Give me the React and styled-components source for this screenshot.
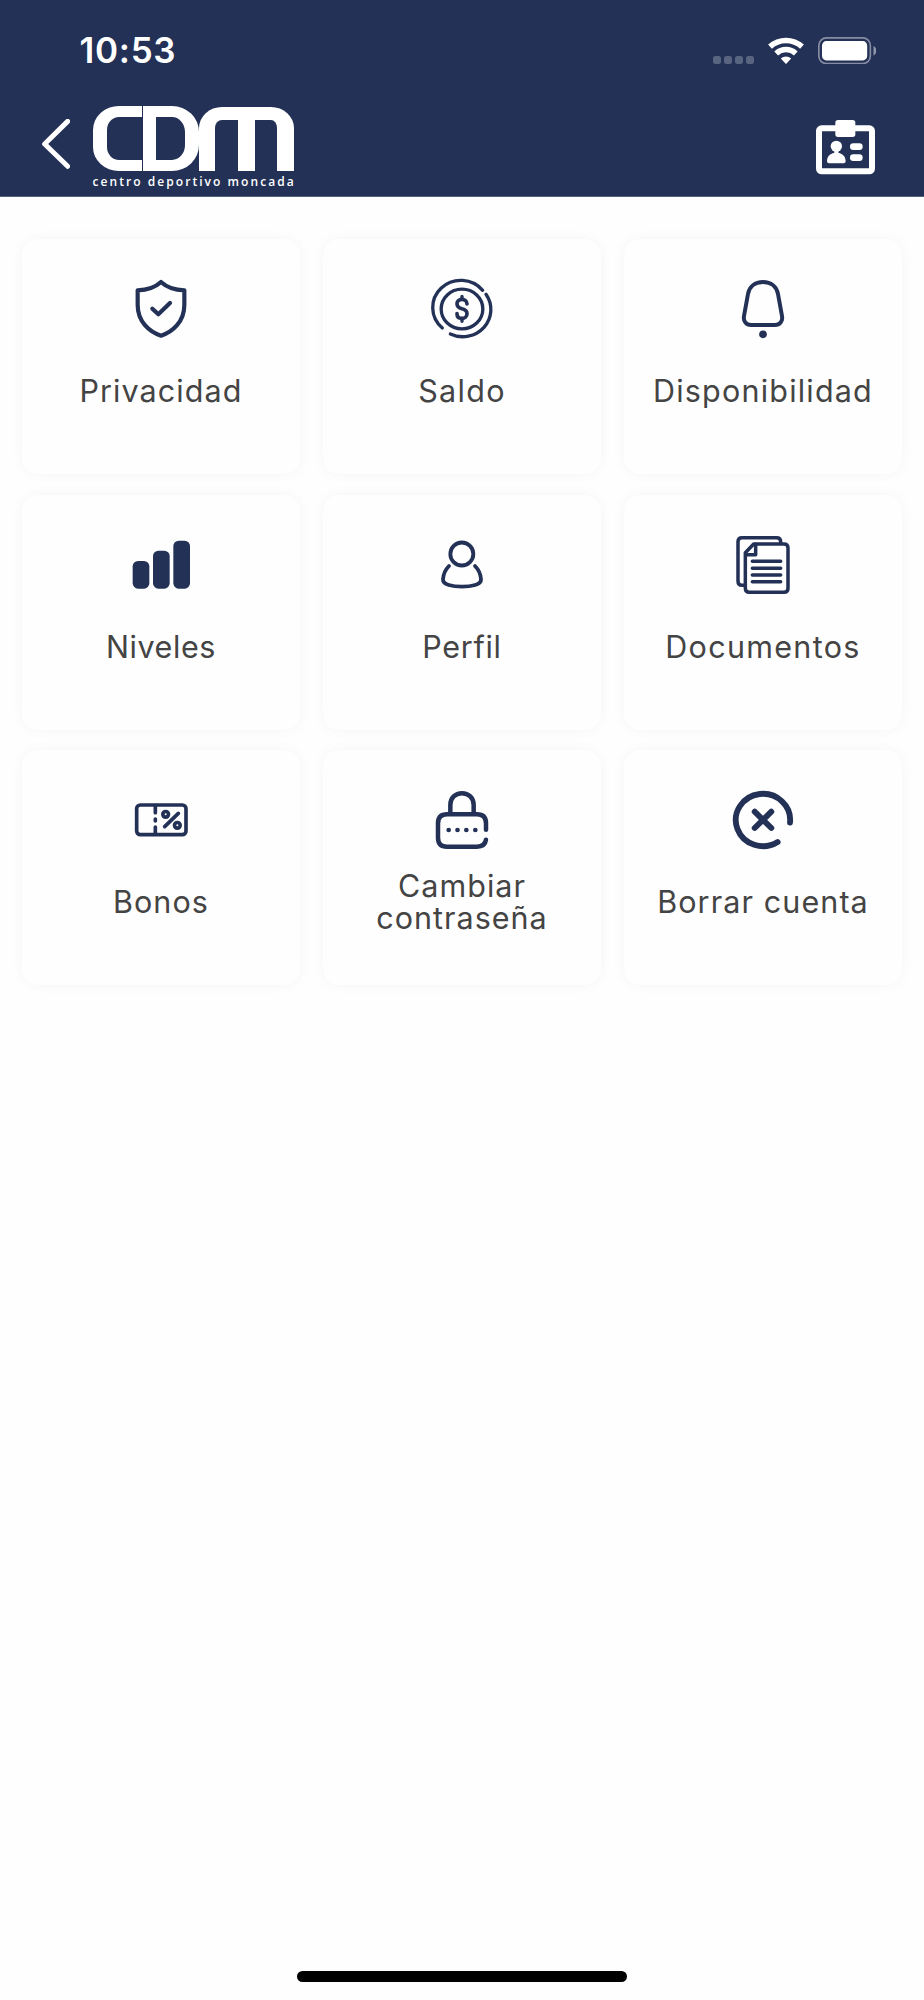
import React from 'react';
import styled, { createGlobalStyle } from 'styled-components';

const NAVY = '#233156';

const MENU = [
  { label: 'Privacidad', icon: 'privacy', tracking: 1.1 },
  { label: 'Saldo', icon: 'balance', tracking: 1.3 },
  { label: 'Disponibilidad', icon: 'bell', tracking: 1.2 },
  { label: 'Niveles', icon: 'levels', tracking: 0.6 },
  { label: 'Perfil', icon: 'profile', tracking: 0.7 },
  { label: 'Documentos', icon: 'documents', tracking: 1.3 },
  { label: 'Bonos', icon: 'voucher', tracking: 1.1 },
  { label: 'Cambiar contraseña', icon: 'lock', tracking: 1 },
  { label: 'Borrar cuenta', icon: 'remove', tracking: 1.1 },
];

// every tile icon is drawn on the same 180x174 grid
const ICONS = {
  privacy: (
    <g strokeWidth="12.5">
      <path d="M90 6C75 20 52 30 20 31V75C20 125 55 156 90 167C125 156 160 125 160 75V31C128 30 105 20 90 6Z" />
      <path d="M64 86L82 103L117 69" />
    </g>
  ),
  balance: (
    <g strokeWidth="10">
      <path d="M152 31A84.500 81.500 0 1 0 31 144" />
      <path d="M162 43A84.500 81.500 0 0 1 55 162" />
      <ellipse cx="90" cy="87" rx="62.5" ry="59.5" />
      <path strokeWidth="11" d="M105 72C105 63 98 58 90 58C81 58 75 64 75 71C75 80 82 84 90 86C99 88 105 93 105 101C105 110 98 115 90 115C81 115 75 110 75 101" />
      <path d="M90 49V58M90 115V124" />
    </g>
  ),
  bell: (
    <g strokeWidth="12">
      <path d="M90 6C66 6 49 20 45 42L33 108C30 124 40 135 54 135H126C140 135 150 124 147 108L135 42C131 20 114 6 90 6Z" />
      <circle cx="90" cy="163" r="11.5" fill={NAVY} stroke="none" />
    </g>
  ),
  levels: (
    <g fill={NAVY} stroke="none">
      <rect x="5" y="75" width="50" height="83" rx="16" />
      <rect x="66" y="44" width="50" height="114" rx="16" />
      <rect x="127" y="14" width="50" height="144" rx="16" />
    </g>
  ),
  profile: (
    <g strokeWidth="11.5">
      <circle cx="89.5" cy="54" r="34.5" />
      <path d="M51 90C40 101 34 115 33 130C32 146 62 152 90 152C118 152 148 146 147 130C146 115 140 101 129 90" />
    </g>
  ),
  documents: (
    <g strokeWidth="10.5">
      <path d="M33 148H27C19 148 15 144 15 136V17C15 9 19 5 27 5H131C139 5 143 9 143 17V22" />
      <path d="M62 24H153Q165 24 165 36V157Q165 169 153 169H49Q37 169 37 157V50Z" />
      <path d="M68 25V56H38" />
      <path d="M58 76H143M58 96.5H143M58 117H143M58 137H143" />
    </g>
  ),
  voucher: (
    <g strokeWidth="11">
      <rect x="17" y="42" width="148" height="89" rx="11" />
      <path d="M73 44V65M73 84V90M73 108V129" />
      <path d="M142 67L101 107" />
      <circle cx="104" cy="70" r="8.5" />
      <circle cx="139" cy="103" r="8.5" />
    </g>
  ),
  lock: (
    <g strokeWidth="13.5">
      <path d="M55 68V42C55 21 70 6.5 90 6.5S125 21 125 42V68" />
      <path d="M162 116V97Q162 70 135 70H45Q18 70 18 97V140Q18 167 45 167H135Q159 167 162 146" />
      <g fill={NAVY} stroke="none">
        <circle cx="50" cy="117" r="7" />
        <circle cx="76.5" cy="117" r="7" />
        <circle cx="103" cy="117" r="7" />
        <circle cx="130" cy="117" r="7" />
      </g>
    </g>
  ),
  remove: (
    <g strokeWidth="17.5">
      <path d="M171 95A81.5 78.5 0 1 0 134 153" />
      <path d="M65 62L115 111M115 62L65 111" />
    </g>
  ),
};

const App = () => {
  return (
    <React.Fragment>
      <GlobalStyle />
      <Screen>
        <Header>
          <StatusBar>
            <Time>10:53</Time>
            <StatusIcons>
              <Signal>
                <i />
                <i />
                <i />
                <i />
              </Signal>
              <svg width="36" height="27.5" viewBox="0 0 108 82" fill="none" stroke="#fff" strokeWidth="16.5">
                <path d="M6 28.6A71 71 0 0 1 102 28.6" />
                <path d="M24.6 49A43.5 43.5 0 0 1 83.4 49" />
                <path d="M54 81L38.5 64A23 23 0 0 1 69.5 64Z" fill="#fff" stroke="none" />
              </svg>
              <svg width="58.5" height="27.5" viewBox="0 0 176 82">
                <rect x="2.5" y="2.5" width="155" height="77" rx="23" fill="none" stroke="#fff" strokeOpacity="0.45" strokeWidth="5" />
                <rect x="12" y="12" width="136" height="58" rx="13" fill="#fff" />
                <path d="M167 27C178 32 178 50 167 55Z" fill="#fff" fillOpacity="0.5" />
              </svg>
            </StatusIcons>
          </StatusBar>
          <NavBar>
            <IconButton aria-label="Volver">
              <svg width="28.3" height="50" viewBox="0 0 85 150" fill="none" stroke="#fff" strokeWidth="15" strokeLinecap="round" strokeLinejoin="round">
                <path d="M77 7L8 75L77 142" />
              </svg>
            </IconButton>
            <Brand>
              <Logo aria-label="CDM">
                <LogoC />
                <LogoD />
                <LogoM />
              </Logo>
              <Tagline>centro deportivo moncada</Tagline>
            </Brand>
            <IconButton aria-label="Carnet">
              <svg width="61" height="56.7" viewBox="0 0 183 170" fill="#fff">
                <rect x="12" y="28" width="159" height="129" rx="8" fill="none" stroke="#fff" strokeWidth="18" />
                <rect x="61" y="3" width="60" height="51" rx="8" />
                <circle cx="64" cy="82" r="17" />
                <path d="M58 92H70V101C84 105 92 112 92 127Q92 133 86 133H42Q36 133 36 127C36 112 44 105 58 101Z" />
                <rect x="105" y="73" width="38" height="20" rx="10" />
                <rect x="105" y="106" width="38" height="20" rx="10" />
              </svg>
            </IconButton>
          </NavBar>
        </Header>
        <Grid>
          {
            MENU.map((item) => (
              <Card key={item.icon}>
                <CardIcon viewBox="0 0 180 174">{ICONS[item.icon]}</CardIcon>
                <Label $tracking={item.tracking}>{item.label}</Label>
              </Card>
            ))
          }
        </Grid>
        <HomeIndicator />
      </Screen>
    </React.Fragment>
  );
}

export default App;

const GlobalStyle = createGlobalStyle`
* {
  box-sizing: border-box;
}
body {
  margin: 0;
  background: #fefefe;
  font-family: Inter, "Liberation Sans", sans-serif;
}
`;

const Screen = styled.div`
display: flex;
flex-direction: column;
width: 924px;
height: 2000px;
`;

const Header = styled.header`
height: 197px;
background: ${NAVY};
border-bottom: 1px solid #56617f;
`;

const StatusBar = styled.div`
display: flex;
align-items: center;
justify-content: space-between;
height: 101px;
padding: 0 48px 0 79.5px;
`;

const Time = styled.span`
font-size: 35px;
font-weight: 600;
line-height: 42px;
letter-spacing: 0.7px;
color: #fff;
margin-top: -1px;
`;

const StatusIcons = styled.div`
display: flex;
align-items: center;
gap: 14px;
`;

const Signal = styled.div`
display: flex;
gap: 3px;
padding-top: 18px;
i {
  width: 8px;
  height: 8px;
  border-radius: 2.5px;
  background: #596480;
}
`;

const NavBar = styled.div`
display: flex;
align-items: flex-start;
height: 95px;
padding: 5px 48px 0 42px;
`;

const IconButton = styled.button`
display: block;
padding: 0;
margin-top: 12.5px;
border: none;
background: none;
svg {
  display: block;
}
`;

const Brand = styled.div`
flex: 1;
margin-left: 22.3px;
`;

const Logo = styled.div`
display: flex;
height: 65px;
`;

const LogoC = styled.span`
width: 49px;
border: solid #fff;
border-width: 11.5px 0 11.5px 14px;
border-radius: 26px 0 0 26px / 24px 0 0 24px;
`;

const LogoD = styled.span`
width: 56px;
margin-left: 1px;
border: solid #fff;
border-width: 11.5px 14px 11.5px 13px;
border-radius: 0 27px 27px 0 / 0 26px 26px 0;
`;

const LogoM = styled.span`
display: flex;
justify-content: center;
width: 95px;
margin: 1px 0 0 0.5px;
border: solid #fff;
border-width: 13px 17px 0 16px;
border-radius: 23px 23px 0 0 / 21px 21px 0 0;
&::before {
  content: '';
  width: 17px;
  background: #fff;
}
`;

const Tagline = styled.div`
font-family: "Open Sans", sans-serif;
font-size: 12px;
font-weight: 600;
line-height: 16px;
letter-spacing: 2.05px;
white-space: nowrap;
color: #fff;
margin-top: 3px;
`;

const Grid = styled.main`
flex: 1;
display: grid;
grid-template-columns: repeat(3, 278px);
grid-auto-rows: 235px;
align-content: start;
gap: 20.5px 23px;
padding: 42px 22px 0;
`;

const Card = styled.div`
display: flex;
flex-direction: column;
align-items: center;
padding-top: 41px;
border-radius: 16px;
background: #fefefe;
box-shadow: 0 0 14px rgba(0, 0, 0, 0.04);
`;

const CardIcon = styled.svg`
flex: none;
width: 60px;
height: 58px;
overflow: visible;
fill: none;
stroke: ${NAVY};
stroke-linecap: round;
stroke-linejoin: round;
`;

const Label = styled.div`
display: flex;
align-items: center;
height: 64px;
max-width: 240px;
margin-top: 21px;
font-size: 30.5px;
font-weight: 400;
line-height: 32px;
letter-spacing: ${props => props.$tracking}px;
text-align: center;
color: #444;
`;

const HomeIndicator = styled.div`
align-self: center;
width: 330px;
height: 11px;
margin-bottom: 18px;
border-radius: 6px;
background: #000;
`;
